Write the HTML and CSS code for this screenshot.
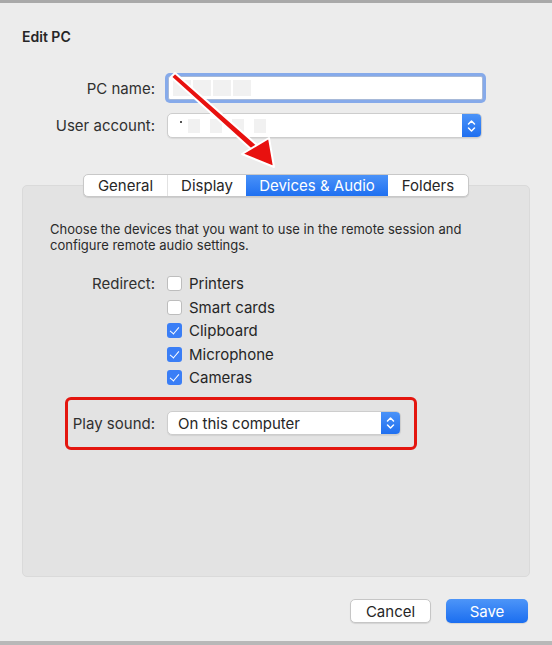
FILE: index.html
```html
<!DOCTYPE html>
<html lang="en">
<head>
    <meta charset="UTF-8">
    <title>Edit PC</title>
    <link rel="stylesheet" href="styles.css">
</head>
<body>

<div class="window">
    <h1 class="title">Edit PC</h1>

    <!-- Name and account fields -->
    <div class="fields">
        <label class="field-label">PC name:</label>
        <div class="text-input focused">
            <span class="blur-block"></span><span class="blur-block"></span><span class="blur-block"></span><span class="blur-block"></span>
        </div>
        <label class="field-label">User account:</label>
        <div class="popup wide">
            <span class="popup-text"><span class="dot"></span><span class="blur-block small"></span><span class="blur-block small"></span><span class="blur-block small"></span><span class="blur-block small"></span></span>
            <span class="stepper">
                <svg width="9" height="14" viewBox="0 0 9 14"><path d="M1.5 5 L4.5 2 L7.5 5 M1.5 9 L4.5 12 L7.5 9" fill="none" stroke="#fff" stroke-width="1.5" stroke-linecap="round" stroke-linejoin="round"/></svg>
            </span>
        </div>
    </div>

    <!-- Tab view -->
    <div class="tab-view">
        <div class="tabs">
            <span class="tab">General</span>
            <span class="tab">Display</span>
            <span class="tab active">Devices &amp; Audio</span>
            <span class="tab">Folders</span>
        </div>

        <p class="description">Choose the devices that you want to use in the remote session and configure remote audio settings.</p>

        <div class="redirect">
            <span class="field-label">Redirect:</span>
            <div class="checks">
                <label class="check"><span class="box"></span>Printers</label>
                <label class="check"><span class="box"></span>Smart cards</label>
                <label class="check"><span class="box checked"></span>Clipboard</label>
                <label class="check"><span class="box checked"></span>Microphone</label>
                <label class="check"><span class="box checked"></span>Cameras</label>
            </div>
        </div>

        <div class="highlight">
            <div class="sound-row">
                <span class="field-label">Play sound:</span>
                <div class="popup narrow">
                    <span class="popup-text">On this computer</span>
                    <span class="stepper">
                        <svg width="9" height="14" viewBox="0 0 9 14"><path d="M1.5 5 L4.5 2 L7.5 5 M1.5 9 L4.5 12 L7.5 9" fill="none" stroke="#fff" stroke-width="1.5" stroke-linecap="round" stroke-linejoin="round"/></svg>
                    </span>
                </div>
            </div>
        </div>
    </div>

    <div class="buttons">
        <button class="btn">Cancel</button>
        <button class="btn primary">Save</button>
    </div>

    <!-- Red annotation arrow -->
    <svg class="arrow" width="552" height="645" viewBox="0 0 552 645">
        <g stroke="#fff" stroke-width="2" stroke-linejoin="round">
            <path d="M171 77 L175 73 L257 145 L252 150 Z" fill="#e8110f"/>
            <path d="M242 154 L269 138 L274 167 Z" fill="#e8110f"/>
        </g>
    </svg>
</div>

</body>
</html>
```

FILE: styles.css
```css
body {
    margin: 0;
    padding: 0;
    background-color: #ececec;
    font-family: Inter, "Liberation Sans", Arial, sans-serif;
    font-size: 15px;
    color: #262626;
}
.window {
    position: relative;
    box-sizing: border-box;
    width: 552px;
    height: 645px;
    border-top: 3px solid #a9a9a9;
    border-bottom: 4px solid #b8b8b8;
    background-color: #ececec;
    overflow: hidden;
}
.title {
    font-size: 14px;
    font-weight: 600;
    line-height: 16px;
    margin: 26px 0 0 22px;
}
.fields {
    display: grid;
    grid-template-columns: 155px 315px;
    column-gap: 12px;
    row-gap: 13px;
    align-items: center;
    margin-top: 31px;
}
.field-label {
    text-align: right;
    color: #303030;
}
.text-input {
    box-sizing: border-box;
    height: 24px;
    width: 315px;
    margin-left: 1px;
    background-color: #fff;
    border: 1px solid #a7b9d8;
    display: flex;
    align-items: center;
    padding-left: 4px;
}
.text-input.focused {
    box-shadow: 0 0 0 3px #86aaea;
    border-radius: 2px;
}
.blur-block {
    display: inline-block;
    width: 18px;
    height: 16px;
    background-color: #f1f1f1;
    margin-right: 2px;
}
.blur-block.small {
    width: 12px;
    height: 14px;
    margin-right: 10px;
}
.dot {
    display: inline-block;
    width: 2px;
    height: 2px;
    background-color: #555;
    margin: 0 6px 8px 2px;
}
.popup {
    box-sizing: border-box;
    height: 25px;
    background-color: #fff;
    border: 1px solid #cdcdcd;
    border-radius: 5px;
    display: flex;
    align-items: center;
    justify-content: space-between;
    box-shadow: 0 1px 1px rgba(0, 0, 0, 0.08);
    overflow: hidden;
}
.popup.wide {
    width: 315px;
}
.popup.narrow {
    width: 234px;
    height: 24px;
}
.popup-text {
    padding-left: 10px;
    display: flex;
    align-items: center;
}
.stepper {
    width: 19px;
    height: 100%;
    background: linear-gradient(#4b93f8, #1f6ff0);
    display: flex;
    align-items: center;
    justify-content: center;
}
.tab-view {
    box-sizing: border-box;
    margin: 47px 22px 0 22px;
    height: 392px;
    background-color: #e3e3e3;
    border: 1px solid #dadada;
    border-radius: 5px;
}
.tabs {
    display: flex;
    width: fit-content;
    margin: -12px auto 0 auto;
    background-color: #fff;
    border: 1px solid #c8c8c8;
    border-radius: 5px;
    box-shadow: 0 1px 1px rgba(0, 0, 0, 0.1);
    overflow: hidden;
    height: 23px;
    box-sizing: border-box;
}
.tab {
    line-height: 21px;
    color: #262626;
    text-align: center;
    border-left: 1px solid #e2e2e2;
}
.tab:nth-child(1) {
    width: 83px;
    border-left: none;
}
.tab:nth-child(2) {
    width: 78px;
}
.tab.active {
    background: linear-gradient(#4a92f8, #1f70f1);
    color: #fff;
    border-left: none;
    width: 142px;
}
.tab:nth-child(4) {
    width: 80px;
    border-left: none;
}
.description {
    margin: 24px 26px 0 27px;
    font-size: 13px;
    line-height: 16px;
    color: #2a2a2a;
}
.redirect {
    display: grid;
    grid-template-columns: 132px auto;
    column-gap: 12px;
    margin-top: 19px;
}
.redirect .field-label {
    line-height: 23.5px;
}
.checks {
    display: flex;
    flex-direction: column;
}
.check {
    display: flex;
    align-items: center;
    height: 23.5px;
    color: #262626;
}
.box {
    box-sizing: border-box;
    width: 15px;
    height: 15px;
    margin-right: 7px;
    background-color: #fff;
    border: 1px solid #bdbdbd;
    border-radius: 3px;
}
.box.checked {
    border: none;
    background-color: #3a7ef6;
    position: relative;
}
.box.checked::after {
    content: "";
    position: absolute;
    left: 5px;
    top: 2px;
    width: 4px;
    height: 8px;
    border-right: 1.6px solid #fff;
    border-bottom: 1.6px solid #fff;
    transform: rotate(40deg);
}
.highlight {
    box-sizing: border-box;
    width: 352px;
    height: 53px;
    margin: 7px 0 0 42px;
    border: 3px solid #e4160f;
    border-radius: 6px;
    display: flex;
    align-items: center;
}
.sound-row {
    display: flex;
    align-items: center;
    gap: 12px;
}
.sound-row .field-label {
    width: 87px;
    white-space: nowrap;
}
.buttons {
    display: flex;
    justify-content: flex-end;
    gap: 15px;
    margin: 22px 24px 0 0;
}
.btn {
    font-family: Inter, "Liberation Sans", Arial, sans-serif;
    font-size: 15px;
    height: 24px;
    width: 81px;
    border-radius: 5px;
    background-color: #fff;
    border: 1px solid #c6c6c6;
    color: #262626;
    box-shadow: 0 1px 1px rgba(0, 0, 0, 0.1);
}
.btn.primary {
    width: 82px;
    border: none;
    background: linear-gradient(#4d95f8, #1b6ef0);
    color: #fff;
}
.arrow {
    position: absolute;
    left: 0;
    top: -3px;
    pointer-events: none;
}
```
